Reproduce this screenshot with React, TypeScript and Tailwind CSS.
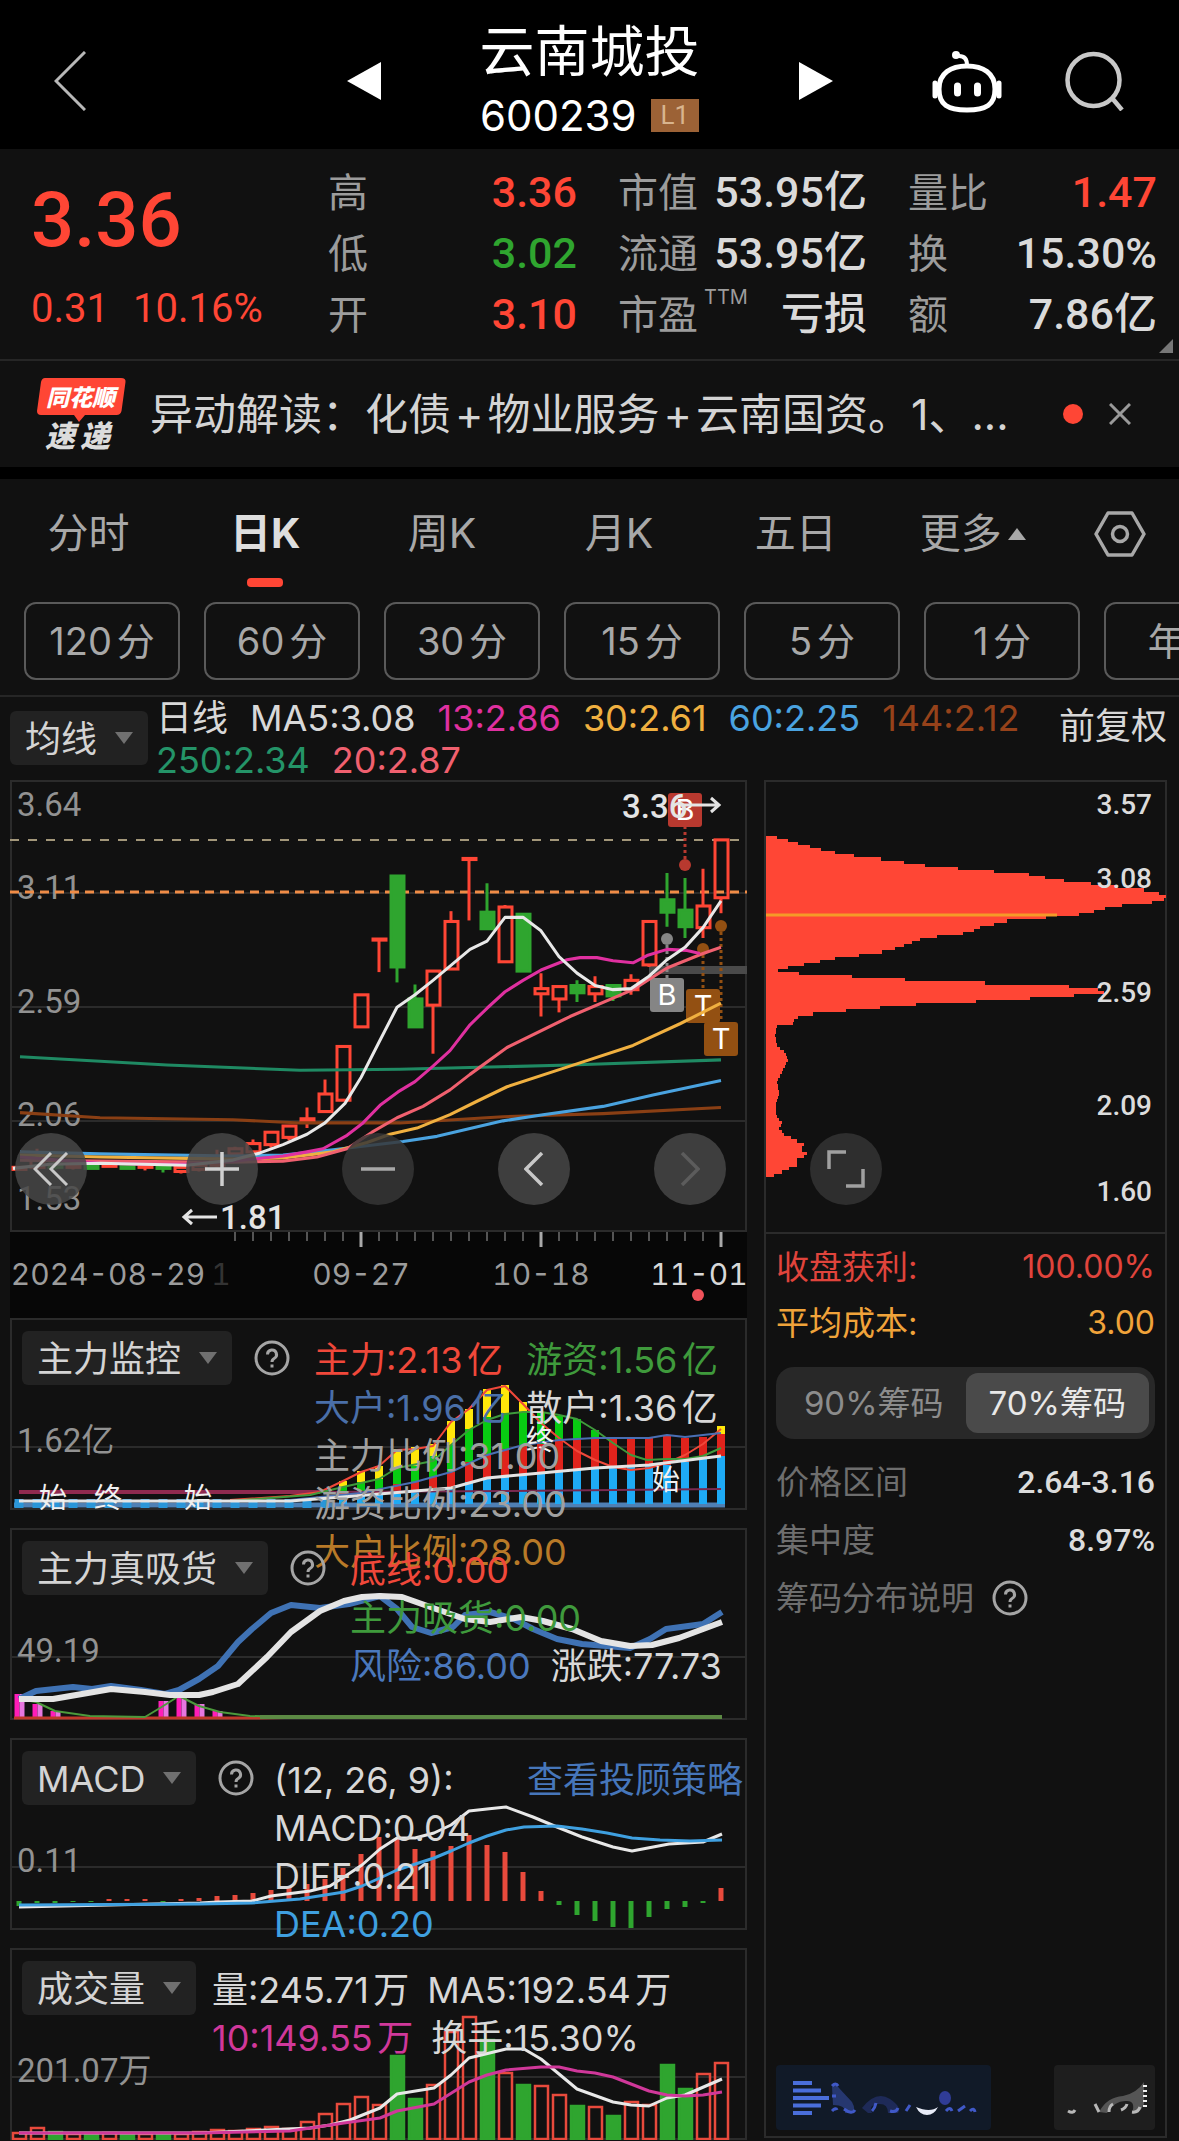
import React, { useState } from "react";

const NUM = "font-['Roboto','Noto_Sans_CJK_SC',sans-serif] [text-autospace:no-autospace]";
const RED = "#ff4635";
const GREEN = "#2fa52f";

// x of the n-th trading day, shared by all charts in the left column
const dayX = (i: number) => 9 + i * 18;

type Candle = [up: boolean, top: number, bottom: number, high: number, low: number];

const candles: Candle[] = [
  [true, 374, 376, 374, 376],
  [true, 366, 374, 356, 378],
  [false, 371, 374, 368, 376],
  [true, 371, 374, 368, 376],
  [false, 372, 375, 372, 375],
  [true, 370, 373, 370, 373],
  [false, 372, 375, 372, 375],
  [true, 371, 374, 371, 377],
  [false, 372, 375, 372, 379],
  [true, 374, 378, 374, 380],
  [true, 372, 376, 370, 378],
  [true, 366, 372, 357, 374],
  [true, 356, 361, 354, 363],
  [true, 351, 359, 347, 359],
  [true, 340, 352, 340, 355],
  [true, 334, 345, 334, 348],
  [true, 327, 329, 316, 336],
  [true, 303, 320, 289, 320],
  [true, 257, 309, 257, 309],
  [true, 207, 238, 207, 238],
  [true, 153, 154, 153, 185],
  [false, 92, 180, 92, 195],
  [false, 211, 238, 197, 238],
  [true, 184, 217, 184, 264],
  [true, 136, 182, 126, 182],
  [true, 75, 76, 75, 135],
  [false, 127, 143, 99, 143],
  [true, 122, 175, 120, 176],
  [false, 129, 184, 129, 184],
  [true, 201, 206, 186, 228],
  [true, 199, 211, 199, 224],
  [false, 198, 205, 193, 214],
  [true, 199, 206, 189, 214],
  [false, 198, 208, 198, 213],
  [true, 193, 202, 187, 207],
  [true, 136, 178, 136, 180],
  [false, 115, 127, 89, 141],
  [false, 125, 141, 94, 152],
  [true, 121, 142, 85, 152],
  [true, 57, 113, 57, 128],
];

const maLines = [
  { color: "#1f8a63", points: "10,267 157,275 290,280 390,279 560,275 711,270" },
  { color: "#8a3f14", points: "10,321 90,326 223,328 290,331 390,331 493,325 593,322 711,316" },
  {
    color: "#4aa3e0",
    points: "10,359 90,361 223,363 273,362 323,357 393,349 427,344 493,329 533,323 593,315 643,304 711,290",
  },
  {
    color: "#f0b040",
    points:
      "10,362 90,364 223,366 273,365 323,359 357,350 380,342 407,336 440,323 467,310 497,296 560,276 623,256 670,235 711,215",
  },
  {
    color: "#f0606f",
    points:
      "10,367 90,368 223,369 273,368 307,364 337,356 362,340 387,326 413,315 440,299 460,284 497,258 560,228 623,202 657,181 693,167 711,161",
  },
  {
    color: "#e030a0",
    points:
      "10,364 90,370 133,371 177,371 223,368 273,363 297,359 313,356 337,343 353,331 370,314 388,301 405,291 423,276 440,261 460,236 477,220 495,204 513,193 531,183 557,173 570,171 587,171 603,174 623,176 637,169 657,163 677,164 690,167",
  },
  {
    color: "#e8e8e8",
    points:
      "3,375 40,371 90,370 177,372 223,367 250,360 273,352 297,342 315,331 335,312 351,287 370,251 387,219 405,207 423,193 460,163 477,155 495,132 513,132 531,145 549,170 567,186 585,198 603,202 621,201 639,189 657,173 675,161 693,142 711,116",
  },
];

// [y, width] outline of the chip distribution
const chips = [
  [54, 2], [55, 11], [62, 36], [69, 63], [73, 88], [77, 124], [82, 159], [86, 203], [88, 228], [91, 263],
  [96, 289], [101, 334], [106, 378], [110, 398], [114, 402], [118, 386], [121, 356], [125, 333], [129, 323],
  [132, 293], [136, 241], [142, 214], [147, 204], [150, 183], [152, 159], [162, 133], [166, 116], [172, 69],
  [178, 38], [183, 11], [186, 13], [189, 74], [192, 111], [194, 166], [196, 219], [198, 290], [201, 328],
  [204, 339], [206, 336], [209, 294], [211, 264], [213, 234], [216, 161], [218, 138], [220, 114], [224, 68],
  [227, 36], [231, 28], [237, 26], [238, 11], [246, 9], [256, 11], [263, 19], [270, 22], [279, 18], [291, 11],
  [304, 13], [314, 10], [324, 10], [331, 16], [337, 13], [343, 18], [352, 38], [357, 34], [362, 43], [368, 29],
  [372, 33], [379, 16], [384, 2],
];

const chipWidth = (y: number) => {
  const n = chips.findIndex((c) => c[0] >= y);
  if (n <= 0) return chips[0][1];
  const [y0, w0] = chips[n - 1];
  const [y1, w1] = chips[n];
  return w0 + ((w1 - w0) * (y - y0)) / (y1 - y0);
};

// tops of the yellow, green, red and blue parts, from day 18 on
const flows = [
  [163, 169, 174, 176], [153, 164, 173, 177], [148, 161, 172, 175], [131, 149, 166, 176], [129, 148, 164, 174],
  [126, 138, 159, 173], [103, 127, 154, 171], [91, 111, 144, 164], [71, 99, 136, 160], [67, 95, 131, 158],
  [84, 94, 128, 157], [94, 94, 126, 155], [98, 98, 121, 154], [101, 101, 121, 152], [112, 112, 120, 151],
  [120, 120, 120, 150], [120, 120, 120, 149], [120, 120, 120, 148], [118, 118, 118, 147], [120, 120, 120, 144],
  [119, 119, 119, 141], [108, 116, 116, 138],
];

const macdBars = [
  168, 165, 165, 164, 164, 161, 161, 161, 164, 161, 160, 158, 157, 155, 152, 149, 146, 141, 130, 116, 99, 100, 111,
  113, 108, 97, 107, 114, 134, 153, 167, 177, 183, 189, 190, 179, 171, 169, 165, 150,
];

const volumes = [
  184, 179, 183, 185, 185, 184, 185, 185, 185, 185, 183, 181, 182, 180, 178, 180, 173, 165, 155, 148, 156, 107, 150,
  136, 83, 68, 91, 124, 136, 137, 146, 157, 158, 167, 153, 156, 116, 140, 125, 114,
];
const volumeDown = [2, 4, 6, 8, 21, 22, 26, 28, 31, 33, 36, 37];

const Line = ({ points, color, width = 2 }: { points: string; color: string; width?: number }) => (
  <polyline points={points} fill="none" stroke={color} strokeWidth={width} strokeLinejoin="round" />
);

const AxisText = ({ y, children }: { y: number; children: React.ReactNode }) => (
  <text x="7" y={y + 13} fontSize="33" fill="#929292" className={NUM}>
    {children}
  </text>
);

const HelpIcon = () => (
  <svg viewBox="0 0 36 36" className="size-9" fill="none" stroke="#a5a5a5" strokeWidth="3">
    <circle cx="18" cy="18" r="16" />
    <path d="M13.5 14.5a4.5 4.5 0 1 1 6.6 4c-1.500 .8-2.100 1.600-2.100 3.500" />
    <path d="M18 24.500v3" />
  </svg>
);

const HelpButton = () => (
  <button type="button" aria-label="帮助" className="mt-[9px] ml-[22px] shrink-0">
    <HelpIcon />
  </button>
);

const DropDown = ({ label, name }: { label: string; name: string }) => (
  <div className="relative shrink-0">
    <select
      aria-label={name}
      className="block h-[54px] appearance-none rounded-md bg-[#222222] pt-0.5 pr-[50px] pl-[15px] text-[36px] leading-[52px] text-[#d4d4d4]"
    >
      <option>{label}</option>
    </select>
    <svg viewBox="0 0 18 12" className="pointer-events-none absolute top-[21px] right-[15px] w-[18px]" fill="#707070">
      <path d="M0 0h18L9 12z" />
    </svg>
  </div>
);

const Header = () => (
  <header className="flex h-[149px] items-center bg-black text-white">
    <div className="flex flex-1 items-center justify-between pt-3 pl-[54px]">
      <button type="button" aria-label="返回">
        <svg viewBox="0 0 32 60" className="h-[60px] w-8" fill="none" stroke="#b8b8b8" strokeWidth="3">
          <path d="M31 1 2 30l29 29" />
        </svg>
      </button>
      <button type="button" aria-label="上一只">
        <svg viewBox="0 0 34 38" className="h-[38px] w-[34px]" fill="#fff">
          <path d="M34 0v38L0 19z" />
        </svg>
      </button>
    </div>
    <div className="mx-[99px] flex flex-col items-center pt-3">
      <h1 className="text-[55px] leading-[70px]">云南城投</h1>
      <div className="flex items-center gap-3.5">
        <span className="text-[42px] leading-[60px]">600239</span>
        <span className={`bg-[#9c6236] px-2.5 text-[26px] leading-[33px] text-[#d8b48e] ${NUM}`}>L1</span>
      </div>
    </div>
    <div className="flex flex-1 items-center pt-3 pr-[54px]">
      <button type="button" aria-label="下一只">
        <svg viewBox="0 0 34 38" className="h-[38px] w-[34px]" fill="#fff">
          <path d="M0 0v38l34-19z" />
        </svg>
      </button>
      <button type="button" aria-label="智能助手" className="ml-auto">
        <svg viewBox="0 0 70 64" className="h-16 w-[70px]" fill="none" stroke="#fff" strokeWidth="5">
          <path d="M35 17c16 0 28 7 28 23s-9 21-28 21S7 56 7 40s12-23 28-23z" />
          <path d="M35 16c0-6-3-9-8-9" strokeWidth="4" />
          <circle cx="24" cy="6" r="4" fill="#fff" stroke="none" />
          <path d="M3 34v13M67 34v13" strokeLinecap="round" />
          <path d="M25.500 37v7M45.500 37v7" strokeWidth="7" strokeLinecap="round" />
        </svg>
      </button>
      <button type="button" aria-label="搜索" className="ml-[63px]">
        <svg viewBox="0 0 60 60" className="size-[60px]" fill="none" stroke="#c8c8c8" strokeWidth="4.500">
          <circle cx="28.500" cy="29" r="26" />
          <path d="m47 47 10 12" />
        </svg>
      </button>
    </div>
  </header>
);

const Stat = ({ label, sup, value, color = "text-[#dadada]" }: { label: string; sup?: string; value: string; color?: string }) => (
  <div className="flex justify-between">
    <dt className="flex text-[40px] text-[#9c9c9c]">
      {label}
      {sup && <sup className="top-0 ml-1.5 text-[20px] leading-[26px]">{sup}</sup>}
    </dt>
    <dd className={`text-[43px] font-medium ${NUM} ${color}`}>{value}</dd>
  </div>
);

const Quote = () => (
  <section className="relative flex gap-[41px] border-b-2 border-[#262626] pt-[13px] pr-[22px] pb-[14px] pl-[31px] leading-[61px]">
    <div className={`-mr-[41px] w-[297px] shrink-0 text-[#ff4635] ${NUM}`}>
      <p className="text-[76px] leading-[116px] font-medium">3.36</p>
      <p className="flex gap-6 text-[40px]">
        <span>0.31</span>
        <span>10.16%</span>
      </p>
    </div>
    <dl className="flex-1">
      <Stat label="高" value="3.36" color="text-[#ff4635]" />
      <Stat label="低" value="3.02" color="text-[#2fa52f]" />
      <Stat label="开" value="3.10" color="text-[#ff4635]" />
    </dl>
    <dl className="flex-1">
      <Stat label="市值" value="53.95亿" />
      <Stat label="流通" value="53.95亿" />
      <Stat label="市盈" sup="TTM" value="亏损" />
    </dl>
    <dl className="flex-1">
      <Stat label="量比" value="1.47" color="text-[#ff4635]" />
      <Stat label="换" value="15.30%" />
      <Stat label="额" value="7.86亿" />
    </dl>
    <svg viewBox="0 0 14 14" className="absolute right-1.5 bottom-1.5 size-3.5" fill="#777">
      <path d="M14 0v14H0z" />
    </svg>
  </section>
);

const News = () => (
  <section className="flex h-[106px] items-center pr-[48px] pl-9">
    <svg viewBox="0 0 92 76" className="h-[76px] w-[92px] shrink-0" fontStyle="italic" fontWeight="900">
      <path d="M9 2h76q5 0 4.500 4l-4 29q-1 4-5 4H49l-6 7-5-7H5q-4 0-4-4L5 6q1-4 4-4z" fill={RED} />
      <text x="10" y="30" fontSize="23" fill="#fff">同花顺</text>
      <text x="9" y="71" fontSize="30" fill="#dcdcdc">速</text>
      <text x="44" y="71" fontSize="30" fill="#dcdcdc">递</text>
    </svg>
    <p className="ml-[22px] flex-1 truncate text-[43px] text-[#d4d4d4]">
      异动解读：化债<span className="mx-1">+</span>物业服务<span className="mx-1">+</span>云南国资。1、...
    </p>
    <span className="ml-6 size-5 rounded-full bg-[#ff4635]" />
    <button type="button" aria-label="关闭" className="ml-[26px]">
      <svg viewBox="0 0 22 22" className="size-[22px]" stroke="#9a9a9a" strokeWidth="3">
        <path d="m1 1 20 20M21 1 1 21" />
      </svg>
    </button>
  </section>
);

const tabs = ["分时", "日K", "周K", "月K", "五日", "更多"];
const periods = ["120分", "60分", "30分", "15分", "5分", "1分", "年K"];

const Periods = () => {
  const [tab, setTab] = useState("日K");
  return (
    <nav className="border-t-[12px] border-b-2 border-t-black border-b-[#262626]">
      <div className="flex h-[110px] [text-autospace:no-autospace]">
        {tabs.map((t) => (
          <button
            key={t}
            type="button"
            onClick={() => setTab(t)}
            className={`relative flex w-[15%] items-center justify-center gap-1.5 text-[41px] ${
              t === tab ? "font-bold text-[#dedede]" : "text-[#a8a8a8]"
            }`}
          >
            {t}
            {t === "更多" && (
              <svg viewBox="0 0 18 12" className="w-[18px]" fill="#a8a8a8">
                <path d="M9 0l9 12H0z" />
              </svg>
            )}
            {t === tab && <span className="absolute bottom-0.5 h-[9px] w-9 rounded bg-[#ff4635]" />}
          </button>
        ))}
        <button type="button" aria-label="设置" className="flex flex-1 items-center justify-center">
          <svg viewBox="0 0 52 46" className="h-[46px] w-[52px]" fill="none" stroke="#a8a8a8" strokeWidth="3.500">
            <path d="M14 2h24l12 21-12 21H14L2 23z" strokeLinejoin="round" />
            <circle cx="26" cy="23" r="7.500" />
          </svg>
        </button>
      </div>
      <div className="mt-[13px] flex gap-6 overflow-hidden pb-[15px] pl-6">
        {periods.map((p) => (
          <button
            key={p}
            type="button"
            className="h-[78px] w-[156px] shrink-0 rounded-xl border-2 border-[#5a5a5a] text-[38px] text-[#a8a8a8]"
          >
            {p}
          </button>
        ))}
      </div>
    </nav>
  );
};

const Averages = () => (
  <div className="flex h-[83px] items-start pr-3 pl-2.5">
    <div className="pt-3.5">
      <DropDown label="均线" name="指标" />
    </div>
    <p className="ml-2 flex flex-1 flex-wrap gap-x-[22px] text-[36px] leading-[42px] text-[#d8d8d8]">
      <span>日线</span>
      <span>MA5:3.08</span>
      <span className="text-[#e030a0]">13:2.86</span>
      <span className="text-[#f0b040]">30:2.61</span>
      <span className="text-[#4aa3e0]">60:2.25</span>
      <span className="text-[#96421a]">144:2.12</span>
      <span className="text-[#249468]">250:2.34</span>
      <span className="text-[#f0606f]">20:2.87</span>
    </p>
    <button type="button" className="text-[36px] leading-[58px] text-[#d8d8d8]">
      前复权
    </button>
  </div>
);

const Marker = ({ x, y, dot, color, children }: { x: number; y: number; dot: number; color: string; children: string }) => (
  <g fill={color}>
    <path d={`M${x} ${dot}V${y}`} stroke={color} strokeWidth="3" strokeDasharray="3 3" />
    <circle cx={x} cy={dot} r="6" />
    <rect x={x - 17} y={y} width="34" height="34" rx="3" />
    <text x={x} y={y + 27} fontSize="29" fill="#fff" textAnchor="middle">
      {children}
    </text>
  </g>
);

const round = "flex size-[72px] shrink-0 items-center justify-center rounded-full";

const CandleChart = () => (
  <div className="relative ring-2 ring-[#2b2b2b] ring-inset">
    <svg viewBox="0 0 737 452" className="block w-full">
      <path d="M0 113h737M0 227h737M0 341h737" stroke="#2b2b2b" strokeWidth="2" />
      <AxisText y={23}>3.64</AxisText>
      <AxisText y={106}>3.11</AxisText>
      <AxisText y={220}>2.59</AxisText>
      <AxisText y={333}>2.06</AxisText>
      <AxisText y={417}>1.53</AxisText>
      <path d="M0 60h730" stroke="#a3977a" strokeWidth="2" strokeDasharray="9 9" />
      <path d="M0 112h737" stroke="#f08c46" strokeWidth="3" strokeDasharray="9 6" />
      <path d="M639 190h98" stroke="#4a4a4a" strokeWidth="8" />
      <g transform="translate(0 1) scale(1 1.033)">
        {candles.map(([up, top, bottom, high, low], i) => (
          <g key={i} stroke={up ? RED : GREEN} strokeWidth="3">
            <path d={`M${dayX(i)} ${high}V${top}M${dayX(i)} ${bottom}V${low}`} />
            <rect x={dayX(i) - 6} y={top} width="13" height={bottom - top} fill={up ? "none" : GREEN} />
          </g>
        ))}
      </g>
      <Marker x={675} y={13} dot={85} color="#b8392f">B</Marker>
      <Marker x={657} y={198} dot={159} color="#858585">B</Marker>
      <Marker x={693} y={209} dot={169} color="#935012">T</Marker>
      <Marker x={711} y={242} dot={146} color="#935012">T</Marker>
      <g transform="translate(0 1) scale(1 1.033)">
        {maLines.map((l) => (
          <Line key={l.color} points={l.points} color={l.color} width={3} />
        ))}
      </g>
      <g fill="#e4e4e4" fontSize="33" fontWeight="500" className={NUM}>
        <text x="612" y="38">3.36</text>
        <text x="210" y="449">1.81</text>
      </g>
      <g fill="none" stroke="#e4e4e4" strokeWidth="3">
        <path d="M672 25h37M701 18l8 7-8 7" />
        <path d="M207 437h-33M182 430l-8 7 8 7" />
      </g>
    </svg>
    <div className="absolute bottom-[27px] left-[5px] flex gap-[84px]">
      <button type="button" aria-label="最早" className={`${round} mr-[15px] bg-[#484848]/85`}>
        <svg viewBox="0 0 36 34" className="w-9" fill="none" stroke="#c8c8c8" strokeWidth="3">
          <path d="M18 1 2 17l16 16M34 1 18 17l16 16" />
        </svg>
      </button>
      <button type="button" aria-label="放大" className={`${round} bg-[#484848]/85`}>
        <svg viewBox="0 0 34 34" className="w-[34px]" stroke="#d0d0d0" strokeWidth="3.500">
          <path d="M0 17h34M17 0v34" />
        </svg>
      </button>
      <button type="button" aria-label="缩小" className={`${round} bg-[#363636]/85`}>
        <svg viewBox="0 0 34 34" className="w-[34px]" stroke="#a8a8a8" strokeWidth="3.500">
          <path d="M0 17h34" />
        </svg>
      </button>
      <button type="button" aria-label="左移" className={`${round} bg-[#3e3e3e]`}>
        <svg viewBox="0 0 20 34" className="w-5" fill="none" stroke="#c8c8c8" strokeWidth="3.500">
          <path d="M18 1 2 17l16 16" />
        </svg>
      </button>
      <button type="button" aria-label="右移" className={`${round} bg-[#3e3e3e]`}>
        <svg viewBox="0 0 20 34" className="w-5" fill="none" stroke="#5c5c5c" strokeWidth="3.500">
          <path d="M2 1l16 16L2 33" />
        </svg>
      </button>
    </div>
  </div>
);

const DateAxis = () => (
  <svg viewBox="0 0 737 86" className="block w-full bg-[#070707]">
    {candles.map((_, i) => {
      const major = i === 19 || i === 29 || i === 39;
      if (i < 12) return null;
      return (
        <path
          key={i}
          d={`M${dayX(i)} 0v${major ? 15 : 9}`}
          stroke={major ? "#a8a8a8" : "#555"}
          strokeWidth={major ? 3 : 2}
        />
      );
    })}
    <g fontSize="30" fill="#9c9c9c" textAnchor="middle" className="tabular-nums">
      <text x="98" y="53">2024-08-29</text>
      <text x="211" y="53" fill="#333">1</text>
      <text x="351" y="53">09-27</text>
      <text x="531" y="53">10-18</text>
      <text x="689" y="53" fill="#d8d8d8">11-01</text>
    </g>
    <circle cx="688" cy="63" r="6" fill="#f0525a" />
  </svg>
);

const Panel = ({ chart, children }: { chart: React.ReactNode; children: React.ReactNode }) => (
  <section className="relative ring-2 ring-[#2b2b2b] ring-inset">
    <svg viewBox="0 0 737 192" className="block w-full">
      <path d="M0 129h737" stroke="#2b2b2b" strokeWidth="2" />
      {chart}
    </svg>
    <div className="absolute inset-x-3 top-[13px] flex items-start text-[36px] leading-[48px] text-[#d8d8d8]">
      {children}
    </div>
  </section>
);

const MainForce = () => (
  <Panel
    chart={
      <>
        <path d="M4 187h711" stroke="#4f80b4" strokeWidth="5" />
        {candles.slice(0, 18).map((_, i) => (
          <path key={i} d={`M${dayX(i)} 181v9`} stroke="#2a96d8" strokeWidth="9" />
        ))}
        {flows.map(([yellow, green, red, blue], n) => {
          const x = dayX(n + 18);
          return (
            <g key={n} strokeWidth="8">
              <path d={`M${x} ${yellow}V${green}`} stroke="#ffe70a" />
              <path d={`M${x} ${green}V${red}`} stroke="#08cc12" />
              <path d={`M${x} ${red}V${blue}`} stroke="#e0231c" />
              <path d={`M${x} ${blue}V186`} stroke="#1eaaf5" />
            </g>
          );
        })}
        <Line color="#8f2a4f" width={4} points="9,174 310,174" />
        <Line color="#7a2a50" width={2} points="310,174 500,173 711,171" />
        <Line
          color="#f0483a"
          points="220,182 280,178 310,174 333,163 351,154 369,148 387,132 405,131 423,128 441,104 459,91 477,72 495,68 513,86 531,105 549,120 567,133 585,142 603,149 621,152 639,150 657,145 675,137 693,126 711,111"
        />
        <Line
          color="#3f9a3c"
          points="220,183 300,177 333,169 369,161 387,150 423,143 441,127 459,112 477,102 495,96 513,94 531,94 549,97 567,101 585,112 603,125 621,137 637,142 657,141 675,141 693,138 711,130"
        />
        <Line
          color="#4a6fb4"
          points="280,182 351,175 405,164 441,154 477,137 513,127 549,122 585,120 639,120 657,117 675,119 711,115"
        />
        <Line
          color="#e4e4e4"
          width={3}
          points="9,183 280,183 333,179 405,173 441,170 477,160 531,155 585,150 639,147 711,138"
        />
        <AxisText y={121}>1.62亿</AxisText>
        <g fontSize="28" fill="#f0f0f0" textAnchor="middle">
          <text x="43" y="190">始</text>
          <text x="98" y="190">终</text>
          <text x="188" y="190">始</text>
          <text x="530" y="132">终</text>
          <text x="656" y="172">始</text>
        </g>
      </>
    }
  >
    <DropDown label="主力监控" name="副图一" />
    <HelpButton />
    <div className="ml-6 pt-[5px]">
      <div className="grid w-max grid-cols-[auto_auto] gap-x-5">
        <span className="text-[#f0483a]">主力:2.13亿</span>
        <span className="text-[#3f9a3c]">游资:1.56亿</span>
        <span className="text-[#4a6fa8]">大户:1.96亿</span>
        <span>散户:1.36亿</span>
      </div>
      <p className="text-[#a0a0a0]">主力比例:31.00</p>
      <p className="text-[#a0a0a0]">游资比例:23.00</p>
      <p className="text-[#b87a28]">大户比例:28.00</p>
    </div>
  </Panel>
);

const Absorb = () => (
  <Panel
    chart={
      <>
        {[
          [0, 166], [1, 176], [2, 183], [8, 173], [9, 168], [10, 176], [11, 183],
        ].map(([i, y]) => (
          <g key={i} strokeWidth="5">
            <path d={`M${dayX(i) - 2} ${y}v${191 - y}`} stroke="#ff1db8" />
            <path d={`M${dayX(i) + 3} ${y}v${191 - y}`} stroke="#e777e0" />
          </g>
        ))}
        <Line color="#c0392b" width={3} points="4,190 250,190 300,189" />
        <Line
          color="#4c9a3c"
          points="9,171 26,174 45,183 80,188 135,189 150,180 169,168 189,178 210,184 240,188 280,189"
        />
        <Line color="#5c8a44" width={4} points="250,189 712,189" />
        <Line
          color="#3f72b4"
          width={6}
          points="9,171 26,163 63,159 82,161 101,158 131,162 155,166 169,162 189,151 208,138 228,114 242,101 261,85 281,77 310,80 339,76 370,68 387,81 402,99 421,105 443,99 455,87 480,84 504,91 523,101 547,111 572,116 620,120 640,111 656,101 693,96 712,84"
        />
        <Line
          color="#e4e4e4"
          width={6}
          points="9,171 43,171 101,161 135,164 160,167 189,167 203,164 228,156 257,129 281,104 310,83 334,73 352,69 370,68 392,69 426,81 455,91 480,94 511,89 533,93 562,101 591,113 620,118 642,117 669,110 712,94"
        />
        <AxisText y={121}>49.19</AxisText>
      </>
    }
  >
    <DropDown label="主力真吸货" name="副图二" />
    <HelpButton />
    <div className="ml-6 pt-[5px]">
      <p className="text-[#f0483a]">底线:0.00</p>
      <p className="text-[#3f9a3c]">主力吸货:0.00</p>
      <p className="flex gap-5 whitespace-nowrap">
        <span className="text-[#4a78bd]">风险:86.00</span>
        <span>涨跌:77.73</span>
      </p>
    </div>
  </Panel>
);

const Macd = () => (
  <Panel
    chart={
      <>
        {macdBars.map((y, i) => (
          <path key={i} d={`M${dayX(i)} 163V${y}`} stroke={y > 163 ? GREEN : "#e84a3c"} strokeWidth="5" />
        ))}
        <Line
          color="#e8e8e8"
          width={3}
          points="9,169 100,167 190,165 208,164 242,163 261,158 300,153 320,148 334,139 352,127 370,111 387,100 405,100 424,95 441,87 459,73 477,71 496,69 523,79 547,89 572,99 603,109 622,113 659,106 693,104 712,96"
        />
        <Line
          color="#3fa0e0"
          width={3}
          points="9,167 190,166 242,165 290,161 334,154 352,148 370,140 387,132 424,120 441,113 459,105 477,98 496,92 514,89 547,88 572,91 597,95 622,100 650,102 680,103 712,102"
        />
        <AxisText y={121}>0.11</AxisText>
      </>
    }
  >
    <DropDown label="MACD" name="副图三" />
    <HelpButton />
    <div className="ml-5 pt-[5px] whitespace-nowrap">
      <p>(12, 26, 9):</p>
      <p>MACD:0.04</p>
      <p>DIFF:0.21</p>
      <p className="text-[#3fa0e0]">DEA:0.20</p>
    </div>
    <a href="#strategy" className="-mr-2 ml-auto pt-[5px] whitespace-nowrap text-[#4676ba]">
      查看投顾策略
    </a>
  </Panel>
);

const Volume = () => (
  <Panel
    chart={
      <>
        {volumes.map((y, i) => {
          const down = volumeDown.includes(i);
          return (
            <rect
              key={i}
              x={dayX(i) - 6}
              y={y + 1}
              width="13"
              height={190 - y}
              fill={down ? GREEN : "none"}
              stroke={down ? GREEN : "#e84a3c"}
              strokeWidth="2.500"
            />
          );
        })}
        <Line
          color="#e8e8e8"
          width={3}
          points="9,185 190,185 300,180 320,177 340,172 370,160 387,146 424,140 441,127 459,110 496,101 514,101 531,111 549,126 567,141 603,154 621,157 639,158 657,150 675,147 712,131"
        />
        <Line
          color="#d0389a"
          width={3}
          points="9,185 190,185 280,183 334,175 370,170 387,163 424,156 459,134 477,127 496,122 531,119 549,119 567,123 585,125 603,129 639,143 657,147 675,148 693,147 712,144"
        />
        <AxisText y={121}>201.07万</AxisText>
      </>
    }
  >
    <DropDown label="成交量" name="副图四" />
    <div className="ml-4 flex flex-wrap gap-x-[18px] pt-[5px]">
      <span>量:245.71万</span>
      <span>MA5:192.54万</span>
      <span className="text-[#d0389a]">10:149.55万</span>
      <span>换手:15.30%</span>
    </div>
  </Panel>
);

const ChipChart = () => (
  <div className="relative border-b-2 border-[#2b2b2b]">
    <svg viewBox="0 0 403 452" className="block w-full">
      <g fill={RED} shapeRendering="crispEdges" transform="scale(1 1.033)">
        {Array.from({ length: 110 }, (_, n) => 54 + n * 3).map((y) => (
          <rect key={y} x="2" y={y} width={chipWidth(y + 1)} height="3" />
        ))}
      </g>
      <path d="M2 135h291" stroke="#f59a28" strokeWidth="3" />
      <g fontSize="28" fontWeight="500" fill="#dcdcdc" textAnchor="end" className={NUM}>
        <text x="388" y="34">3.57</text>
        <text x="388" y="108">3.08</text>
        <text x="388" y="222">2.59</text>
        <text x="388" y="335">2.09</text>
        <text x="388" y="421">1.60</text>
      </g>
    </svg>
    <button type="button" aria-label="全屏" className={`${round} absolute bottom-[27px] left-[46px] bg-[#2e2e2e]`}>
      <svg viewBox="0 0 38 38" className="w-[38px]" fill="none" stroke="#a0a0a0" strokeWidth="3.500">
        <path d="M2 19V2h17M36 19v17H19" />
      </svg>
    </button>
  </div>
);

const ChipPanel = () => {
  const [range, setRange] = useState("70%筹码");
  return (
    <aside className="mb-0.5 flex min-w-0 flex-[403] flex-col ring-2 ring-[#2b2b2b] ring-inset">
      <ChipChart />
      <div className="flex flex-1 flex-col px-3 pt-[5px] text-[33px] leading-[56px]">
        <p className="flex justify-between text-[#e0443c]">
          <span>收盘获利:</span>
          <span className="text-[32px]">100.00%</span>
        </p>
        <p className="flex justify-between text-[#f0a33a]">
          <span>平均成本:</span>
          <span className="text-[32px]">3.00</span>
        </p>
        <div className="mt-4 flex h-[72px] rounded-[18px] bg-[#282828] p-1.5">
          {["90%筹码", "70%筹码"].map((r) => (
            <button
              key={r}
              type="button"
              aria-pressed={r === range}
              onClick={() => setRange(r)}
              className={`flex-1 rounded-xl ${r === range ? "bg-[#4a4a4a] text-[#e8e8e8]" : "text-[#8c8c8c]"}`}
            >
              {r}
            </button>
          ))}
        </div>
        <dl className="mt-3.5 leading-[58px] text-[#6e6e6e]">
          <div className="flex justify-between">
            <dt>价格区间</dt>
            <dd className={`text-[32px] font-medium text-[#dcdcdc] ${NUM}`}>2.64-3.16</dd>
          </div>
          <div className="flex justify-between">
            <dt>集中度</dt>
            <dd className={`text-[32px] font-medium text-[#dcdcdc] ${NUM}`}>8.97%</dd>
          </div>
        </dl>
        <button type="button" className="flex items-center gap-[18px] leading-[58px] text-[#6e6e6e]">
          筹码分布说明
          <HelpIcon />
        </button>
        <div className="mt-auto mb-2 flex justify-between">
          <button type="button" aria-label="筹码选股" className="h-[65px] w-[215px] rounded bg-[#111a28] pl-4">
            <svg viewBox="0 0 190 36" className="w-[190px]">
              <path d="M1 3h19M1 10.500h28M1 18h36M1 25.500h28M1 33h19" stroke="#4a6edb" strokeWidth="4" />
              <path d="M40 7q4-5 7 1l13 14q5 9-1 11h-6q1-8-12-8z" fill="#26376f" />
              <path d="M70 28q14-18 28-9 12 8 8 14H96q0-10-10-9t-6 9h-4z" fill="#1e2a58" />
              <path
                d="M40 6q4-4 6 0M40 16h4M40 31q4-4 5-1M52 29q8 6 11 1M80 31q3-3 4-8M98 31q6 2 8-3M114 31l4-6M154 31q4-5 6 0M166 31l7-5M178 31q4-4 5 1"
                stroke="#4059c8"
                strokeWidth="3"
                fill="none"
              />
              <path d="M124 27q14 6 22 0-4 8-11 8t-11-8z" fill="#e8ecf8" />
              <ellipse cx="153" cy="18" rx="6" ry="7" fill="#303c96" />
            </svg>
          </button>
          <button type="button" aria-label="去操作" className="flex h-[65px] w-[101px] items-center justify-end rounded bg-[#1e1e1e] pr-1.5">
            <svg viewBox="0 0 90 36" className="w-[90px]">
              <path d="M40 32q8-15 24-16 14-3 21-14v22q-4 10-12 9 4-12-5-12-12-1-20 12z" fill="#555" />
              <path
                d="M9 31q5 3 7-1M36 24l4 8M50 32q0-6 4-8M62 30q5-2 6-6M73 32q6 1 8-5"
                stroke="#b8b8b8"
                strokeWidth="3"
                fill="none"
              />
              <path d="M86 5v25" stroke="#f0f0f0" strokeWidth="4" strokeDasharray="2 3" />
            </svg>
          </button>
        </div>
      </div>
    </aside>
  );
};

export default function App() {
  return (
    <div className="min-h-screen overflow-hidden bg-[#111111] font-['Inter','Noto_Sans_CJK_SC',sans-serif] [text-autospace:normal]">
      <Header />
      <Quote />
      <News />
      <Periods />
      <Averages />
      <main className="flex gap-[17px] pr-3 pl-2.5">
        <div className="min-w-0 flex-[737]">
          <CandleChart />
          <DateAxis />
          <div className="flex flex-col gap-[18px]">
            <MainForce />
            <Absorb />
            <Macd />
            <Volume />
          </div>
        </div>
        <ChipPanel />
      </main>
    </div>
  );
}
